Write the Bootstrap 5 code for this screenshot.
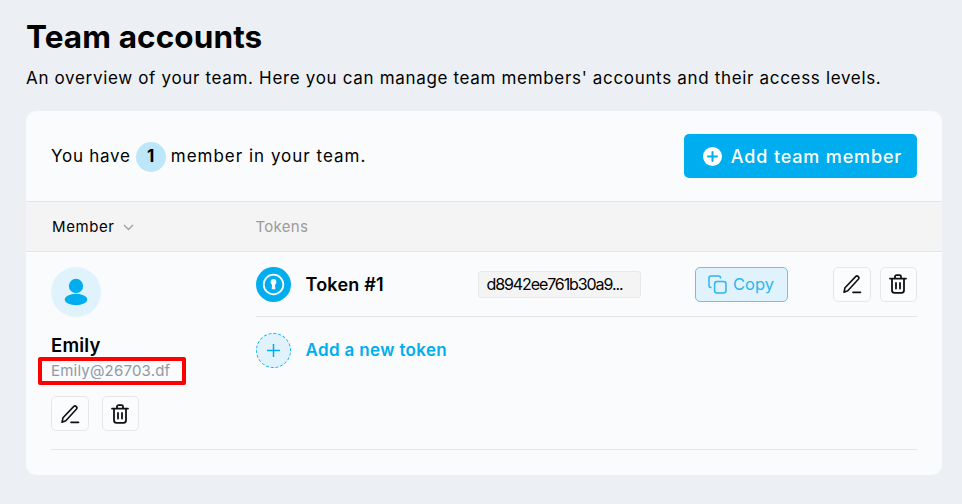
<!DOCTYPE html>
<html lang="en">
<head>
  <meta charset="UTF-8" />
  <meta name="viewport" content="width=device-width, initial-scale=1" />
  <title>Team accounts</title>
  <link href="https://cdn.jsdelivr.net/npm/bootstrap@5.3.0/dist/css/bootstrap.min.css" rel="stylesheet" />
  <style>
    body {
      font-family: Inter, "Liberation Sans", sans-serif;
      background-color: #ecf0f4;
      color: #000;
      padding: 0 20px 0 26px;
      height: 504px;
      overflow: hidden;
    }
    .page-title { font-size: 31.5px; font-weight: 700; line-height: 36px; margin: 19px 0 0; letter-spacing: .1px; }
    .page-sub { font-size: 17px; line-height: 24px; margin: 11px 0 0; height: 21px; letter-spacing: .67px; white-space: nowrap; }
    .team-card { background: #fafbfd; border-radius: 10px; margin-top: 24px; height: 364px; padding-top: 23px; }
    .top-bar { padding: 0 25px; height: 67px; font-size: 17px; letter-spacing: 1px; }
    .have-text { letter-spacing: .75px; }
    .count-dot { width: 30px; height: 30px; border-radius: 50%; background: #bee6f9; font-weight: 700; margin: 0 5px; letter-spacing: 0; }
    .add-btn { background: #00aeef; color: #fff; width: 233px; height: 44px; padding: 0 0 0 4px; border: 0; border-radius: 5px; font-size: 18px; font-weight: 500; letter-spacing: .85px; gap: 9px; }
    .head-row { background: #f4f4f4; border-top: 1px solid #e3e5e8; border-bottom: 1px solid #e3e5e8; height: 51px; padding: 1px 25px 0 26px; font-size: 15px; letter-spacing: .6px; }
    .col-member { width: 203.5px; flex: none; }
    .muted-head { color: #9b9b9b; letter-spacing: .3px; padding-top: 1px; }
    .body-row { padding: 15px 25px 0; }
    .member-col { width: 204.5px; flex: none; }
    .avatar { width: 50px; height: 50px; border-radius: 50%; background: #e0f3fc; }
    .member-name { font-size: 18.5px; font-weight: 600; line-height: 22px; margin-top: 17px; letter-spacing: .2px; }
    .mail-wrap { width: fit-content; font-size: 15px; line-height: 20px; color: #8f9aa5; margin-top: 5px; letter-spacing: .2px; }
    .red-mark { position: absolute; left: -13px; top: -4px; width: 148px; height: 28px; border: 4px solid #f00; border-radius: 2px; }
    .square-btn { height: 35px; width: 38px; padding: 0; background: #fbfcfe; border: 1px solid #e6e7ea; border-radius: 5px; }
    .square-btn.narrow { width: 37px; padding-right: 2px; }
    .member-actions { margin-top: 15px; gap: 13px; }
    .member-end { border-top: 1px solid #e3e5e8; margin: 18px 25px 0; }
    .token-col { flex: 1; min-width: 0; }
    .token-row { height: 50px; padding-bottom: 15px; border-bottom: 1px solid #e3e5e8; }
    .key-dot { width: 35px; height: 35px; border-radius: 50%; background: #00aeef; flex: none; }
    .token-name { width: 172px; margin-left: 15px; flex: none; font-size: 18px; font-weight: 600; letter-spacing: .2px; }
    .token-val { width: 163px; height: 27px; flex: none; background: #f4f4f4; border: 1px solid #e8e8e8; border-radius: 3px; font-size: 16px; line-height: 25px; padding-left: 8px; letter-spacing: -1.1px; overflow: hidden; white-space: nowrap; }
    .copy-btn { width: 93px; height: 35px; margin-left: 54px; padding: 0; background: #e0f3fc; border: 1px solid #5cc8f3; border-radius: 5px; color: #2cb5ef; font-size: 16.5px; gap: 6px; }
    .token-actions { margin-left: auto; gap: 9px; }
    .add-token { margin-top: 16px; gap: 15px; color: #00aeef; font-size: 17px; font-weight: 600; letter-spacing: .35px; }
    .plus-dot { width: 35px; height: 35px; border-radius: 50%; background: #e0f3fc; border: 1px dashed #14b4f0; flex: none; }
  </style>
</head>
<body>
  <h1 class="page-title">Team accounts</h1>
  <p class="page-sub">An overview of your team. Here you can manage team members' accounts and their access levels.</p>

  <div class="team-card">
    <!-- Top bar -->
    <div class="top-bar d-flex justify-content-between">
      <div class="d-flex align-items-center align-self-start" style="height:46px">
        <span class="have-text">You have</span> <span class="count-dot d-flex align-items-center justify-content-center">1</span> member in your team.
      </div>
      <button class="add-btn d-flex align-items-center justify-content-center" type="button">
        <svg width="19" height="19" viewBox="0 0 19 19"><circle cx="9.5" cy="9.5" r="9.5" fill="#fff"/><path d="M9.5 5v9M5 9.5h9" stroke="#00aeef" stroke-width="2" stroke-linecap="round"/></svg>
        Add team member
      </button>
    </div>

    <!-- Table head -->
    <div class="head-row d-flex align-items-center">
      <div class="col-member d-flex align-items-center gap-2">
        Member
        <svg width="11" height="7" viewBox="0 0 11 7"><path d="M1 1l4.5 4.5L10 1" fill="none" stroke="#9aa3ab" stroke-width="1.4"/></svg>
      </div>
      <div class="muted-head">Tokens</div>
    </div>

    <!-- Member row -->
    <div class="body-row d-flex">
      <div class="member-col">
        <div class="avatar d-flex align-items-center justify-content-center">
          <svg width="24" height="28" viewBox="0 0 24 28" fill="#00aeef"><circle cx="12" cy="8" r="7.2"/><ellipse cx="12" cy="21.5" rx="11.3" ry="5.7"/></svg>
        </div>
        <div class="member-name">Emily</div>
        <div class="mail-wrap position-relative">Emily@26703.df<span class="red-mark"></span></div>
        <div class="member-actions d-flex">
          <button class="square-btn d-flex align-items-center justify-content-center" type="button" aria-label="Edit">
            <svg width="20" height="20" viewBox="0 0 20 20" fill="none" stroke="#111" stroke-width="1.6" stroke-linejoin="round" stroke-linecap="round"><path d="M2 18.2l1-4.4L13.6 2.6c.8-.8 1.9-.8 2.7 0s.8 1.9 0 2.7L5.8 16.8z"/><path d="M11 18.4h7.5"/></svg>
          </button>
          <button class="square-btn narrow d-flex align-items-center justify-content-center" type="button" aria-label="Delete">
            <svg width="18" height="20" viewBox="0 0 18 20" fill="none" stroke="#111" stroke-width="1.8" stroke-linejoin="round" stroke-linecap="round"><path d="M1 4.6h16M6 4.4V2.6c0-.9.6-1.5 1.5-1.5h3c.9 0 1.5.6 1.5 1.5v1.8M3 4.8v11.4c0 1.6 1 2.7 2.6 2.7h6.8c1.6 0 2.6-1.1 2.6-2.7V4.8M7 9v5.6M11 9v5.6"/></svg>
          </button>
        </div>
      </div>

      <div class="token-col">
        <div class="token-row d-flex align-items-center">
          <span class="key-dot d-flex align-items-center justify-content-center">
            <svg width="23" height="23" viewBox="0 0 23 23"><circle cx="11.5" cy="11.5" r="9.8" fill="none" stroke="#fff" stroke-width="1.8"/><circle cx="11.5" cy="9" r="2.9" fill="#fff"/><path d="M10.2 10h2.6l.5 6.2h-3.6z" fill="#fff"/></svg>
          </span>
          <span class="token-name">Token #1</span>
          <span class="token-val">d8942ee761b30a9...</span>
          <button class="copy-btn d-flex align-items-center justify-content-center" type="button">
            <svg width="19" height="19" viewBox="0 0 19 19" fill="none" stroke="#2cb5ef" stroke-width="1.5" stroke-linejoin="round"><rect x="6.6" y="6.6" width="11.4" height="11.4" rx="2.4"/><path d="M12.5 3.4V3c0-1.1-.9-2-2-2H3C1.900 1 1 1.900 1 3v7.500c0 1.100.9 2 2 2h.5"/></svg>
            Copy
          </button>
          <div class="token-actions d-flex">
            <button class="square-btn d-flex align-items-center justify-content-center" type="button" aria-label="Edit">
              <svg width="20" height="20" viewBox="0 0 20 20" fill="none" stroke="#111" stroke-width="1.6" stroke-linejoin="round" stroke-linecap="round"><path d="M2 18.2l1-4.4L13.600 2.600c.8-.8 1.900-.8 2.700 0s.8 1.900 0 2.700L5.800 16.800z"/><path d="M11 18.400h7.500"/></svg>
            </button>
            <button class="square-btn narrow d-flex align-items-center justify-content-center" type="button" aria-label="Delete">
              <svg width="18" height="20" viewBox="0 0 18 20" fill="none" stroke="#111" stroke-width="1.8" stroke-linejoin="round" stroke-linecap="round"><path d="M1 4.600h16M6 4.400V2.600c0-.9.6-1.500 1.500-1.500h3c.9 0 1.500.6 1.500 1.500v1.800M3 4.800v11.400c0 1.600 1 2.700 2.600 2.700h6.800c1.600 0 2.600-1.100 2.600-2.700V4.800M7 9v5.600M11 9v5.600"/></svg>
            </button>
          </div>
        </div>
        <div class="add-token d-flex align-items-center">
          <span class="plus-dot d-flex align-items-center justify-content-center">
            <svg width="15" height="15" viewBox="0 0 15 15"><path d="M7.500 1v13M1 7.500h13" stroke="#00aeef" stroke-width="1.500"/></svg>
          </span>
          Add a new token
        </div>
      </div>
    </div>
    <div class="member-end"></div>
  </div>

  <script src="https://cdn.jsdelivr.net/npm/bootstrap@5.3.0/dist/js/bootstrap.bundle.min.js"></script>
</body>
</html>
